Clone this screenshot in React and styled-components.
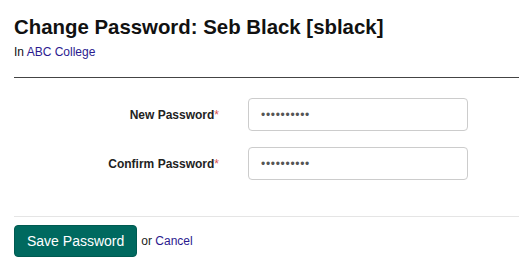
import React from "react";
import styled, { createGlobalStyle } from "styled-components";

const Global = createGlobalStyle`
  html, body { margin: 0; padding: 0; background: #fff; }
  body { font-family: "Liberation Sans", Arial, sans-serif; color: #000; }
`;

const Page = styled.div`
  padding: 14px 0 0 14px;
  width: 505px;
`;

const Title = styled.h1`
  margin: 0;
  font-size: 20.4px;
  font-weight: bold;
  line-height: 26px;
  color: #111;
`;

const Sub = styled.div`
  margin-top: 5px;
  font-size: 12px;
  line-height: 14px;
  color: #111;
  a { color: #2b1a8f; text-decoration: none; }
`;

const Rule = styled.hr`
  margin: 18px 0 0 0;
  border: none;
  border-top: 1px solid #444;
  height: 0;
`;

const Form = styled.div`
  display: grid;
  grid-template-columns: 205px 220px;
  column-gap: 29px;
  row-gap: 16px;
  margin-top: 20px;
  align-items: center;
`;

const Label = styled.label`
  text-align: right;
  font-size: 12px;
  font-weight: bold;
  color: #222;
  span { color: #d9534f; font-weight: normal; }
`;

const Input = styled.input`
  box-sizing: border-box;
  width: 220px;
  height: 33px;
  border: 1px solid #ccc;
  border-radius: 4px;
  padding: 0 12px;
  font-size: 12px;
  letter-spacing: 0.7px;
  font-family: "Liberation Sans", Arial, sans-serif;
  color: #555;
  outline: none;
`;

const Footer = styled.div`
  margin-top: 36px;
  border-top: 1px solid #e5e5e5;
  padding-top: 8px;
  display: flex;
  align-items: center;
  gap: 4px;
  font-size: 12px;
  color: #222;
  a { color: #2b1a8f; text-decoration: none; }
`;

const Button = styled.button`
  background: #00695f;
  color: #fff;
  border: 1px solid #005a51;
  border-radius: 4px;
  font-family: "Liberation Sans", Arial, sans-serif;
  font-size: 14px;
  height: 32px;
  padding: 0 12px;
  cursor: pointer;
`;

export default function App() {
  return (
    <>
      <Global />
      <Page>
        <Title>Change Password: Seb Black [sblack]</Title>
        <Sub>
          In <a href="#">ABC College</a>
        </Sub>
        <Rule />
        <Form>
          <Label>
            New Password<span>*</span>
          </Label>
          <Input type="password" defaultValue="1234567890" />
          <Label>
            Confirm Password<span>*</span>
          </Label>
          <Input type="password" defaultValue="1234567890" />
        </Form>
        <Footer>
          <Button>Save Password</Button>
          <span>
            or <a href="#">Cancel</a>
          </span>
        </Footer>
      </Page>
    </>
  );
}
